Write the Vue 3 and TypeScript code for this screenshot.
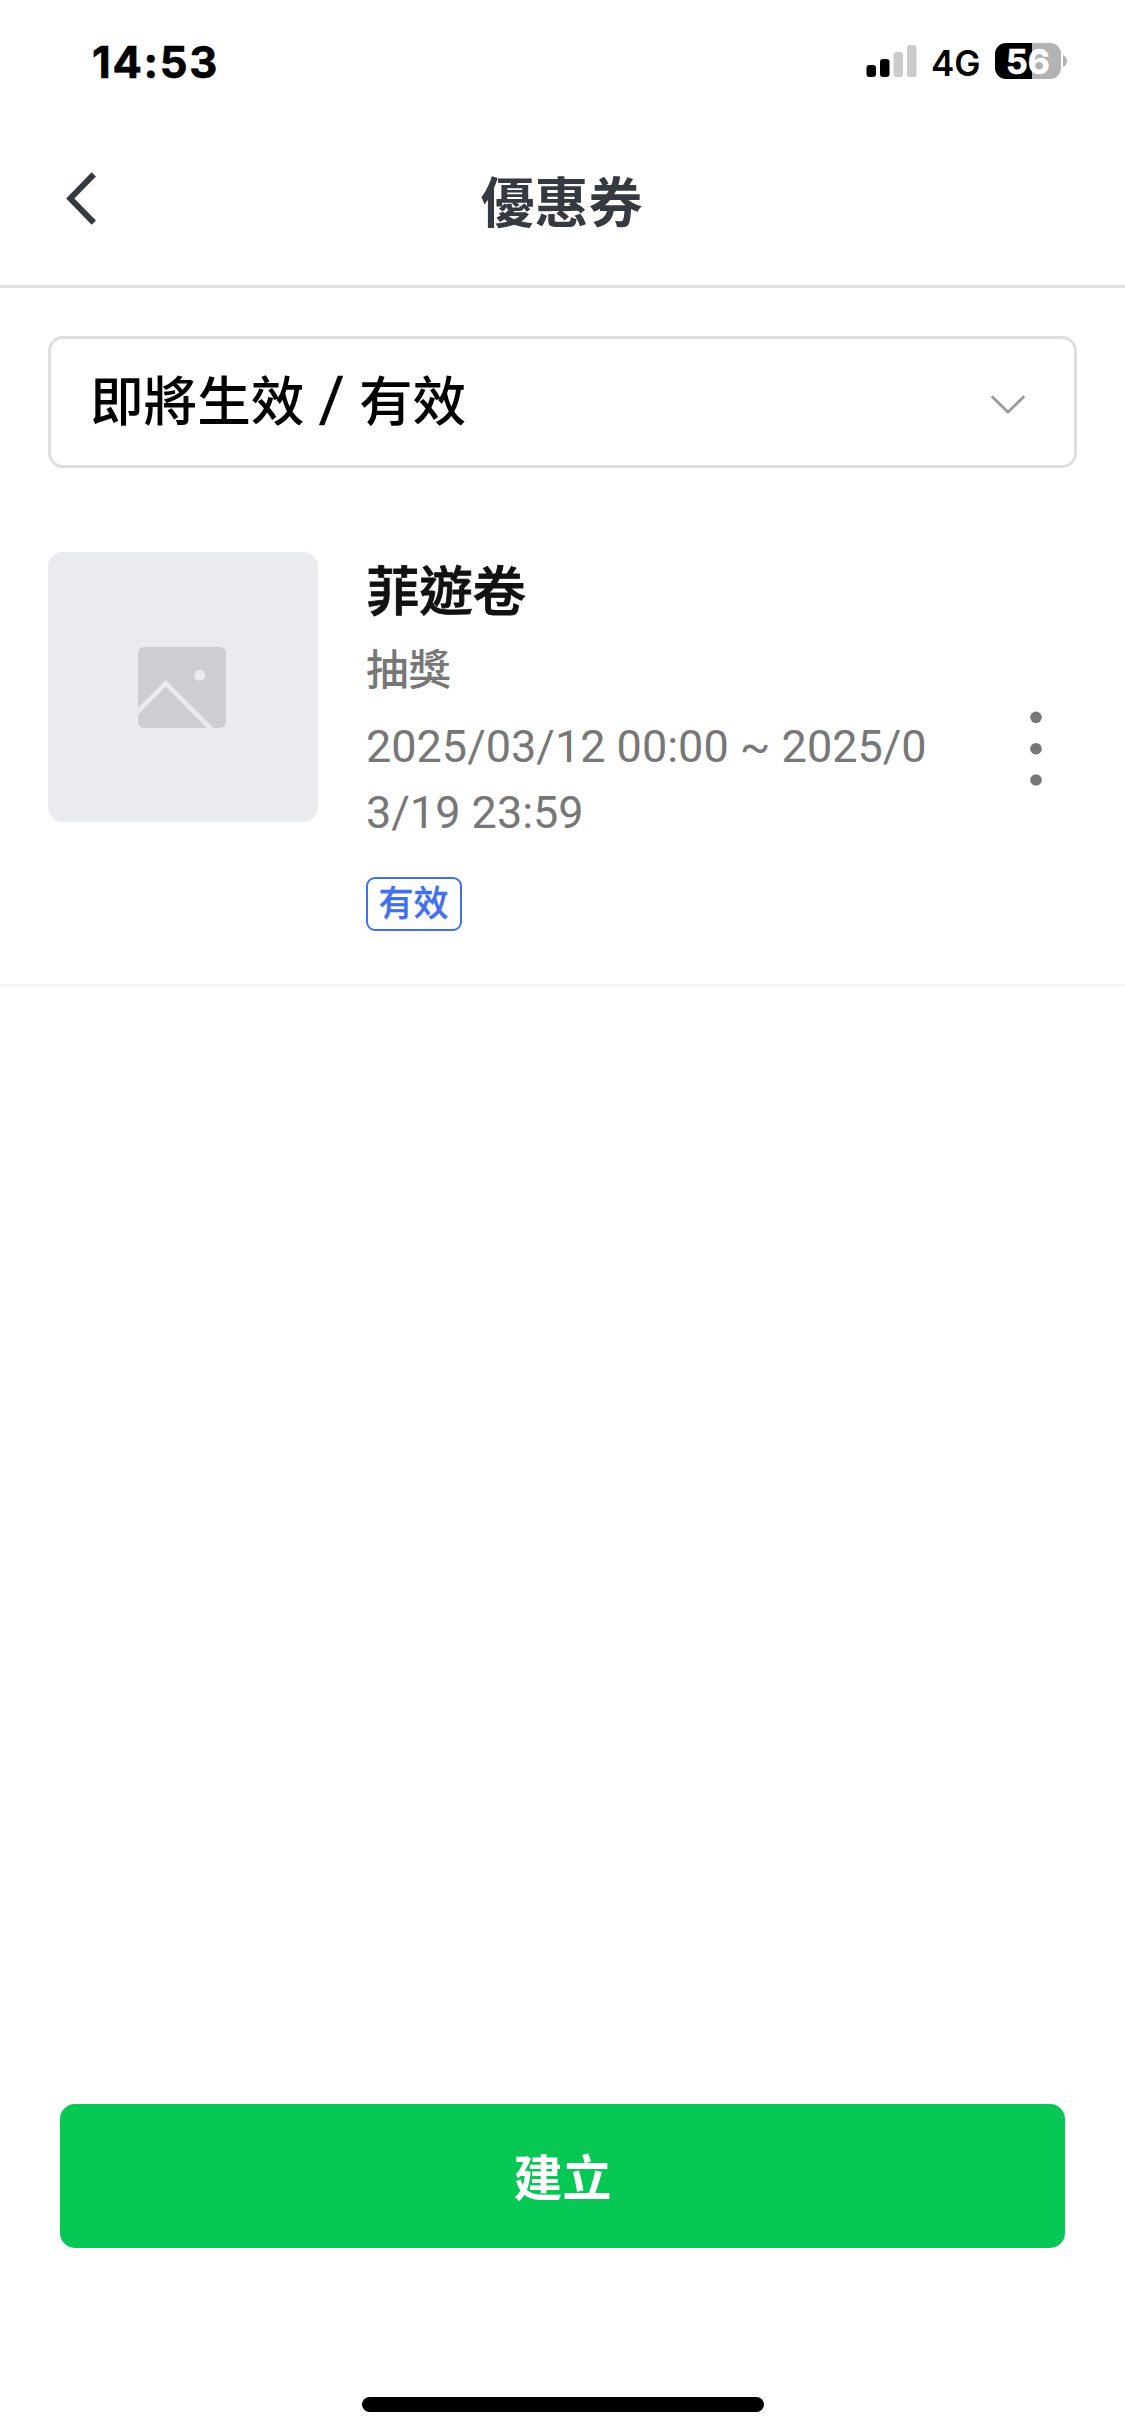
<script setup lang="ts">
interface Coupon {
  id: number
  title: string
  type: string
  period: string
  status: string
}

interface SignalBar {
  x: number
  height: number
  active: boolean
}

const time = '14:53'
const network = '4G'
const battery = '56'

const bars: SignalBar[] = [
  { x: 0.5, height: 12, active: true },
  { x: 14, height: 18, active: true },
  { x: 27.5, height: 25, active: false },
  { x: 41, height: 32, active: false },
]

const coupons: Coupon[] = [
  {
    id: 1,
    title: '菲遊卷',
    type: '抽獎',
    period: '2025/03/12 00:00 ~ 2025/03/19 23:59',
    status: '有效',
  },
]
</script>

<template>
  <div class="screen">
    <div class="status-bar">
      <span class="time">{{ time }}</span>
      <div class="indicators">
        <svg class="signal" width="52" height="34" viewBox="0 0 52 34">
          <rect
            v-for="bar in bars"
            :key="bar.x"
            :x="bar.x"
            :y="33 - bar.height"
            width="9.5"
            :height="bar.height"
            rx="3"
            :fill="bar.active ? '#000' : '#cbcbcb'"
          />
        </svg>
        <span class="network">{{ network }}</span>
        <div class="battery">
          <span class="battery-body">{{ battery }}</span>
          <svg class="battery-cap" width="4" height="12" viewBox="0 0 4 12">
            <path d="M0 0C2.4 1 4 3.300 4 6s-1.600 5-4 6z" fill="#b3b3b3" />
          </svg>
        </div>
      </div>
    </div>

    <header class="header">
      <button class="back" type="button">
        <svg width="36" height="56" viewBox="0 0 36 56">
          <path d="M31.800 4.300 8.300 28.500l23.500 24.200" fill="none" stroke="#353a40" stroke-width="6" />
        </svg>
      </button>
      <h1 class="heading">優惠券</h1>
    </header>

    <main class="content">
      <div class="filter">
        <div class="filter-label">即將生效 <span class="slash">/</span> 有效</div>
        <svg width="36" height="20" viewBox="0 0 36 20">
          <path d="M1.700 2.200 18 18 34.300 2.200" fill="none" stroke="#999" stroke-width="2.700" />
        </svg>
      </div>

      <article v-for="coupon in coupons" :key="coupon.id" class="coupon">
        <div class="thumb">
          <svg width="88" height="81" viewBox="0 0 88 81">
            <rect width="88" height="81" rx="6" fill="#cdced2" />
            <path d="M-3 67.300 27.700 36.400 75 83.700" fill="none" stroke="#eaebef" stroke-width="4.800" />
            <circle cx="61.700" cy="28.300" r="5.500" fill="#eaebef" />
          </svg>
        </div>
        <div class="details">
          <h2 class="title">{{ coupon.title }}</h2>
          <p class="type">{{ coupon.type }}</p>
          <p class="period">{{ coupon.period }}</p>
          <span class="badge">{{ coupon.status }}</span>
        </div>
        <button class="more" type="button">
          <svg width="12" height="76" viewBox="0 0 12 76" fill="#777">
            <circle cx="6" cy="6.300" r="5.800" />
            <circle cx="6" cy="37.700" r="5.800" />
            <circle cx="6" cy="69" r="5.800" />
          </svg>
        </button>
      </article>
    </main>

    <footer class="footer">
      <button class="create" type="button">建立</button>
      <div class="home-indicator"></div>
    </footer>
  </div>
</template>

<style>
body {
  margin: 0;
  background: #fff;
}
</style>

<style scoped>
.screen {
  display: flex;
  flex-direction: column;
  width: 1125px;
  height: 2436px;
  overflow: hidden;
  background: #fff;
  font-family: Roboto, 'Noto Sans CJK TC', sans-serif;
}

.screen * {
  box-sizing: border-box;
}

svg {
  display: block;
}

button {
  padding: 0;
  border: 0;
  background: none;
  font-family: inherit;
}

h1,
h2,
p {
  margin: 0;
}

.status-bar {
  display: flex;
  align-items: center;
  justify-content: space-between;
  flex: none;
  height: 122px;
  padding: 0 58px 0 92px;
  color: #000;
  font-family: Inter, sans-serif;
}

.time {
  padding-top: 1px;
  font-size: 43.5px;
  font-weight: 700;
  line-height: 52px;
  letter-spacing: 1.7px;
  -webkit-text-stroke: 0.6px #000;
}

.indicators {
  display: flex;
  align-items: center;
}

.network {
  width: 77px;
  padding: 3px 0 0 13px;
  font-size: 35px;
  font-weight: 600;
  line-height: 40px;
}

.battery {
  display: flex;
  align-items: center;
  gap: 2px;
}

.battery-body {
  width: 66px;
  height: 36px;
  border-radius: 11px;
  background: linear-gradient(90deg, #000 37px, #b3b3b3 37px);
  color: #fff;
  font-size: 34px;
  font-weight: 700;
  line-height: 37px;
  text-align: center;
  -webkit-text-stroke: 0.6px #fff;
}

.header {
  display: grid;
  grid-template-columns: 160px 1fr 160px;
  align-items: center;
  flex: none;
  height: 166px;
  border-bottom: 3px solid #dee0e5;
}

.back {
  width: 36px;
  margin: -11px 0 0 62px;
}

.heading {
  padding: 2px 2px 0 0;
  color: #353a40;
  font-size: 54px;
  font-weight: 700;
  line-height: 80px;
  text-align: center;
}

.content {
  flex: 1;
}

.filter {
  display: flex;
  align-items: center;
  justify-content: space-between;
  height: 132px;
  margin: 48px 48px 0;
  padding: 3px 48px 0 39px;
  border: 3px solid #dedede;
  border-radius: 15px;
}

.filter-label {
  padding-bottom: 2px;
  color: #000;
  font-size: 53.6px;
  font-weight: 500;
  line-height: 80px;
}

.slash {
  margin: 0 1px;
  font-size: 63px;
  font-weight: 400;
  line-height: 1;
  -webkit-text-stroke: 0.5px #000;
}

.coupon {
  display: flex;
  align-items: flex-start;
  height: 435px;
  margin-top: 84px;
  padding: 0 48px;
  border-bottom: 3px solid #f4f4f4;
}

.thumb {
  display: flex;
  flex: none;
  align-items: center;
  justify-content: center;
  width: 270px;
  height: 270px;
  padding: 1px 2px 0 0;
  border-radius: 15px;
  background: #eaebef;
}

.details {
  width: 570px;
  margin-left: 48px;
}

.title {
  padding-top: 1px;
  color: #111;
  font-size: 53.5px;
  font-weight: 500;
  line-height: 80px;
  letter-spacing: -0.2px;
  -webkit-text-stroke: 0.9px #111;
}

.type {
  margin-top: 5px;
  color: #777;
  font-size: 42.5px;
  font-weight: 500;
  line-height: 66px;
}

.period {
  margin-top: 10px;
  color: #777;
  font-size: 45px;
  line-height: 66px;
  word-break: break-all;
}

.badge {
  display: block;
  width: 96px;
  height: 54px;
  padding-right: 1px;
  margin-top: 31px;
  border: 2px solid #4270ed;
  border-radius: 9px;
  color: #4270ed;
  font-size: 35px;
  font-weight: 500;
  line-height: 52px;
  text-align: center;
  -webkit-text-stroke: 0.3px #4270ed;
}

.more {
  margin: 159px 0 0 94px;
}

.footer {
  display: flex;
  flex-direction: column;
  align-items: center;
  flex: none;
  height: 332px;
}

.create {
  width: 1005px;
  height: 144px;
  padding-bottom: 4px;
  border-radius: 15px;
  background: #07c755;
  color: #fff;
  font-size: 49px;
  font-weight: 700;
}

.home-indicator {
  width: 402px;
  height: 15px;
  margin-top: 149px;
  border-radius: 8px;
  background: #000;
}
</style>
